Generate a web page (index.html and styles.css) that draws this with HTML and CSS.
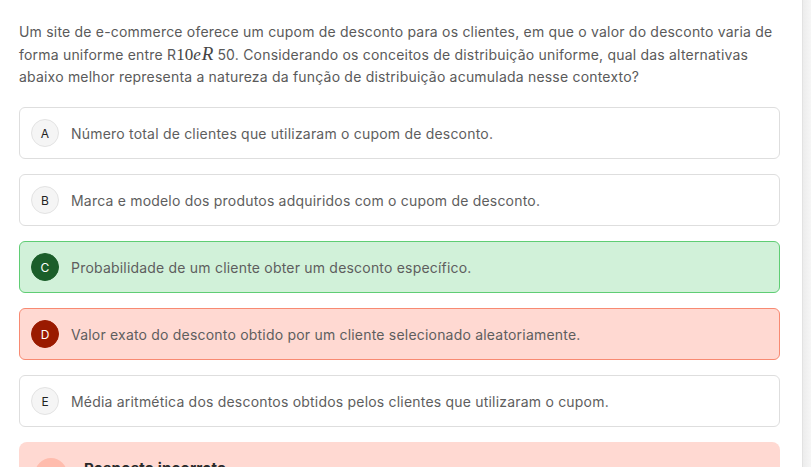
FILE: index.html
```html
<!DOCTYPE html>
<html lang="pt-BR">
<head>
<meta charset="utf-8">
<title>Questão</title>
<link rel="stylesheet" href="styles.css">
</head>
<body>
<div class="page">
  <main class="main">
    <p class="question">Um site de e-commerce oferece um cupom de desconto para os clientes, em que o valor do desconto varia de forma uniforme entre R<span class="math">10<i class="ie">e</i><i class="big">R</i></span><span class="gap"></span>50. Considerando os conceitos de distribuição uniforme, qual das alternativas abaixo melhor representa a natureza da função de distribuição acumulada nesse contexto?</p>
    <div class="options">
      <div class="option"><span class="letter">A</span><span class="text">Número total de clientes que utilizaram o cupom de desconto.</span></div>
      <div class="option"><span class="letter">B</span><span class="text">Marca e modelo dos produtos adquiridos com o cupom de desconto.</span></div>
      <div class="option correct"><span class="letter">C</span><span class="text">Probabilidade de um cliente obter um desconto específico.</span></div>
      <div class="option wrong"><span class="letter">D</span><span class="text">Valor exato do desconto obtido por um cliente selecionado aleatoriamente.</span></div>
      <div class="option"><span class="letter">E</span><span class="text">Média aritmética dos descontos obtidos pelos clientes que utilizaram o cupom.</span></div>
    </div>
    <div class="result">
      <span class="result-icon"></span>
      <span class="result-title">Resposta incorreta</span>
    </div>
  </main>
  <div class="side"></div>
</div>
</body>
</html>
```

FILE: styles.css
```css
html, body {
  margin: 0;
  padding: 0;
  background: #ffffff;
  height: 100%;
  overflow: hidden;
}
body {
  font-family: Inter, "Noto Sans", sans-serif;
  font-size: 14px;
  letter-spacing: 0.2px;
  color: #555555;
}
.page {
  display: flex;
  height: 467px;
}
.main {
  flex: 1;
  padding: 21px 22px 0 19px;
  min-width: 0;
}
.side {
  width: 8px;
  border-left: 1px solid #e2e2e2;
  background: linear-gradient(to right, #ececec, #f6f6f6);
}
.question {
  margin: 0 0 19px 0;
  line-height: 22px;
  color: #5a5a5a;
}
.math {
  font-family: "Liberation Serif", "DejaVu Serif", serif;
  font-size: 17px;
  letter-spacing: 0;
  color: #444;
}
.math i {
  font-style: italic;
}
.math .ie {
  margin-right: 1px;
}
.math .big {
  font-size: 19px;
}
.gap {
  display: inline-block;
  width: 4px;
}
.options {
  display: flex;
  flex-direction: column;
  gap: 15px;
}
.option {
  display: flex;
  align-items: center;
  gap: 12px;
  height: 52px;
  box-sizing: border-box;
  padding: 0 11px;
  border: 1px solid #dedede;
  border-radius: 6px;
  background: #ffffff;
}
.letter {
  width: 28px;
  height: 28px;
  box-sizing: border-box;
  border-radius: 50%;
  border: 1px solid #e3e3e3;
  background: #f5f5f5;
  display: flex;
  align-items: center;
  justify-content: center;
  font-size: 12px;
  letter-spacing: 0;
  color: #222;
  flex: none;
}
.text {
  color: #5e5e5e;
  font-size: 14px;
}
.option.correct {
  background: #d1f1d9;
  border-color: #5fcd74;
}
.option.correct .letter {
  background: #1b5e2a;
  border-color: #1b5e2a;
  color: #ffffff;
}
.option.wrong {
  background: #ffd9d2;
  border-color: #f88a72;
}
.option.wrong .letter {
  background: #9a1a00;
  border-color: #9a1a00;
  color: #ffffff;
}
.result {
  margin-top: 15px;
  background: #ffd9d2;
  border-radius: 8px;
  height: 80px;
  display: flex;
  align-items: flex-start;
  padding: 16px 0 0 16px;
  gap: 17px;
}
.result-icon {
  width: 32px;
  height: 32px;
  border-radius: 50%;
  background: #ffbcad;
  flex: none;
}
.result-title {
  font-weight: 700;
  font-size: 15px;
  line-height: 18px;
  color: #2a2a2a;
  margin-top: 2px;
}
```
